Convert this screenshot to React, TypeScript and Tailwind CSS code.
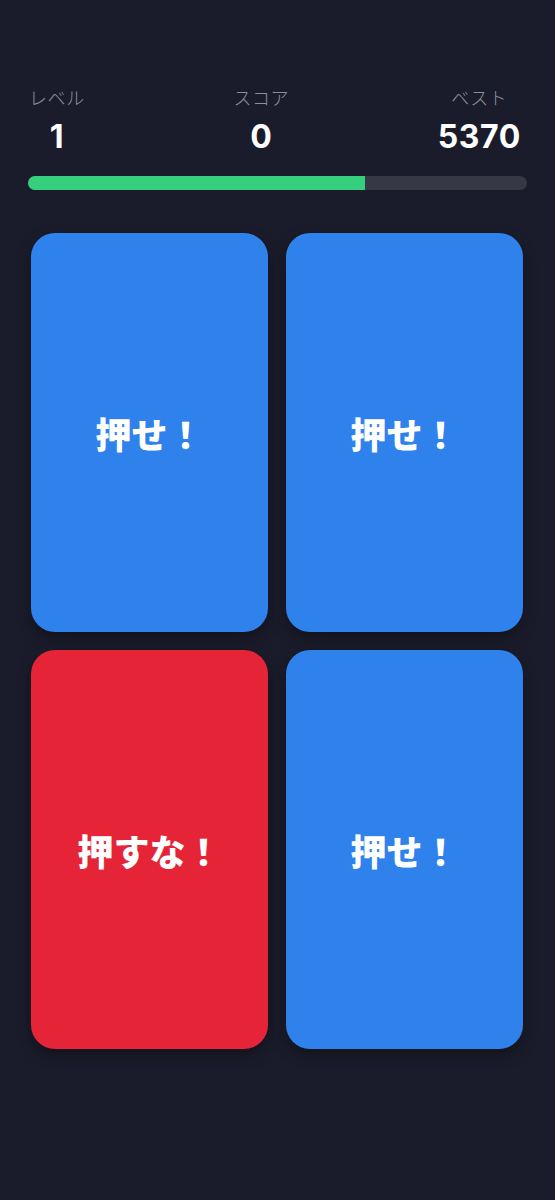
import React from "react";

type Stat = { label: string; value: string };

const stats: Stat[] = [
  { label: "レベル", value: "1" },
  { label: "スコア", value: "0" },
  { label: "ベスト", value: "5370" },
];

type Tile = { text: string; danger: boolean };

const tiles: Tile[] = [
  { text: "押せ！", danger: false },
  { text: "押せ！", danger: false },
  { text: "押すな！", danger: true },
  { text: "押せ！", danger: false },
];

const jp = { fontFamily: '"Noto Sans CJK JP", "Noto Sans", sans-serif' };

export default function App() {
  const progress = 0.676;
  return (
    <div className="min-h-[1200px] w-full bg-[#1b1c2b] text-white" style={jp}>
      <div className="flex justify-between pl-[29px] pr-[34px] pt-[85px]">
        {stats.map((s) => (
          <div key={s.label} className="flex flex-col items-center">
            <div className="text-[18px] leading-[24px] font-light tracking-[0.6px] text-[#8b8e9c]">
              {s.label}
            </div>
            <div
              className="mt-[12px] text-[32px] leading-[32px] font-bold tracking-[0.6px]"
              style={{ fontFamily: '"Inter", "Liberation Sans", sans-serif' }}
            >
              {s.value}
            </div>
          </div>
        ))}
      </div>

      <div className="mx-[28px] mt-[23px] h-[14px] overflow-hidden rounded-full bg-[#363845]">
        <div className="h-full bg-[#35cf7e]" style={{ width: `${progress * 100}%` }} />
      </div>

      <div className="mt-[43px] grid grid-cols-2 gap-[18px] pl-[31px] pr-[32px]">
        {tiles.map((t, i) => (
          <button
            key={i}
            className={`flex h-[399px] items-center justify-center rounded-[24px] shadow-[0_6px_14px_rgba(0,0,0,0.35)] ${
              t.danger ? "bg-[#e52437]" : "bg-[#2f82ec]"
            }`}
          >
            <span className="text-[36px] font-black text-white" style={jp}>
              {t.text}
            </span>
          </button>
        ))}
      </div>
    </div>
  );
}
